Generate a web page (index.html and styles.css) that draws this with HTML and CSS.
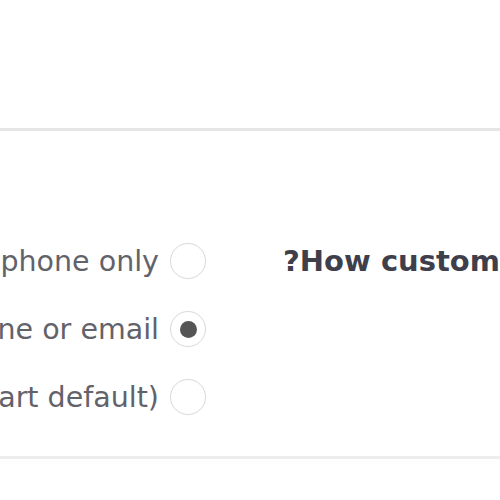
FILE: index.html
```html
<!DOCTYPE html>
<html lang="en">
<head>
<meta charset="utf-8">
<link rel="stylesheet" href="styles.css">
</head>
<body>
<div class="top"></div>
<section class="settings">
  <div class="options">
    <label class="option">
      <span class="option-text">Customers can check out using phone only</span>
      <span class="radio"></span>
    </label>
    <label class="option">
      <span class="option-text">Customers can check out using phone or email</span>
      <span class="radio radio-checked"></span>
    </label>
    <label class="option">
      <span class="option-text">Customers can check out using email (Smart default)</span>
      <span class="radio"></span>
    </label>
  </div>
  <div class="heading-col">
    <h2 class="heading" dir="rtl">How customers check out?</h2>
  </div>
</section>
</body>
</html>
```
FILE: styles.css
```css
html, body {
  margin: 0;
  padding: 0;
  background: #fff;
  overflow: hidden;
  width: 500px;
  height: 500px;
}
body {
  font-family: "DejaVu Sans", Verdana, sans-serif;
  color: #62626a;
}
.top {
  height: 128px;
}
.settings {
  border-top: 3px solid #e6e6e6;
  border-bottom: 3px solid #ededed;
  padding: 96px 0 25px;
  display: grid;
  grid-template-columns: 206px 1fr;
  column-gap: 77px;
  align-items: start;
}
.options {
  display: flex;
  flex-direction: column;
  align-items: flex-end;
}
.option {
  height: 68px;
  display: flex;
  align-items: center;
  justify-content: flex-end;
  gap: 11px;
  white-space: nowrap;
  font-size: 28.5px;
}
.radio {
  flex: none;
  width: 34px;
  height: 34px;
  border: 1.5px solid #dadada;
  border-radius: 50%;
  box-shadow: 0 0 1px rgba(0,0,0,0.05);
  display: flex;
  align-items: center;
  justify-content: center;
}
.radio-checked::after {
  content: "";
  width: 17px;
  height: 17px;
  border-radius: 50%;
  background: #555;
}
.heading-col {
  height: 68px;
  display: flex;
  align-items: center;
  min-width: 0;
}
.heading {
  margin: 0;
  font-size: 29px;
  font-weight: bold;
  color: #3f3f4c;
  white-space: nowrap;
  width: max-content;
}
```
